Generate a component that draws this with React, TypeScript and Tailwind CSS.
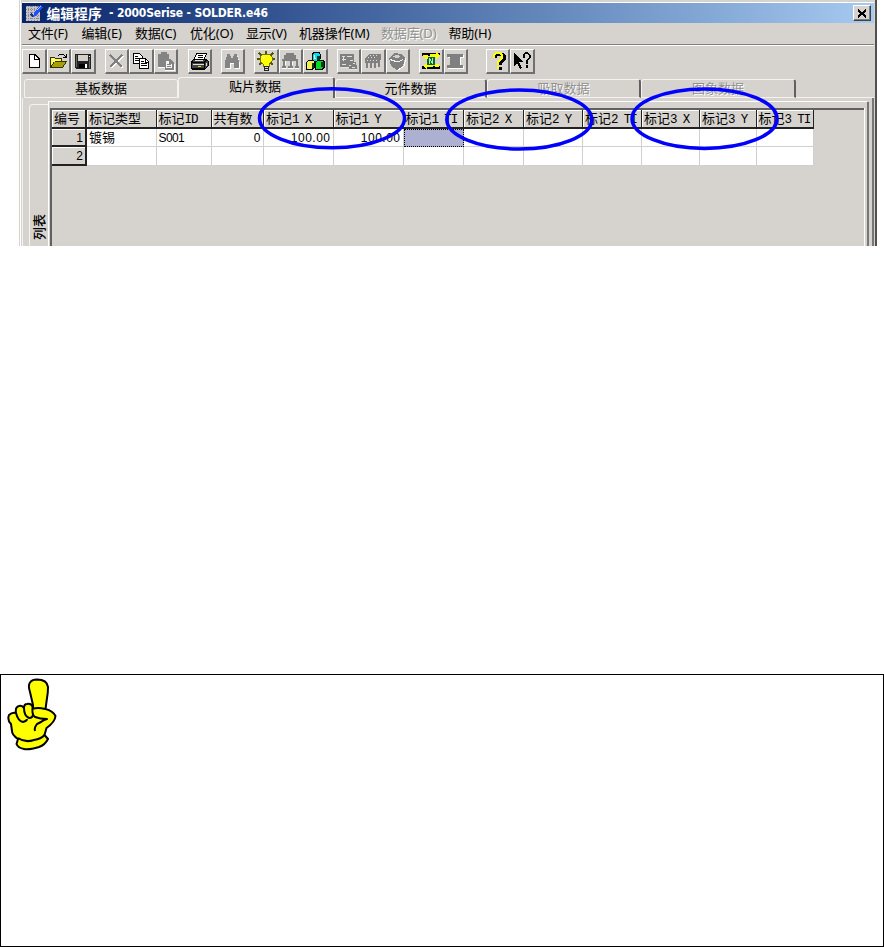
import React from 'react';
import { clsx } from 'clsx';

interface MenuItem {
  label: string;
  width: string;
  disabled?: boolean;
}

interface Column {
  title: string;
  suffix: string;
  width: string;
}

const menus: MenuItem[] = [
  { label: '文件(F)', width: 'w-[53.5px]' },
  { label: '编辑(E)', width: 'w-[53.5px]' },
  { label: '数据(C)', width: 'w-[55px]' },
  { label: '优化(O)', width: 'w-[56px]' },
  { label: '显示(V)', width: 'w-[53px]' },
  { label: '机器操作(M)', width: 'w-[82px]' },
  { label: '数据库(D)', width: 'w-[67.5px]', disabled: true },
  { label: '帮助(H)', width: 'w-[60px]' },
];

const columns: Column[] = [
  { title: '标记类型', suffix: '', width: 'w-[69.5px]' },
  { title: '标记', suffix: 'ID', width: 'w-[55px]' },
  { title: '共有数', suffix: '', width: 'w-[52.5px]' },
  { title: '标记', suffix: '1 X', width: 'w-[69.5px]' },
  { title: '标记', suffix: '1 Y', width: 'w-[70px]' },
  { title: '标记', suffix: '1 TI', width: 'w-[60.5px]' },
  { title: '标记', suffix: '2 X', width: 'w-[60px]' },
  { title: '标记', suffix: '2 Y', width: 'w-[59px]' },
  { title: '标记', suffix: '2 TI', width: 'w-[59px]' },
  { title: '标记', suffix: '3 X', width: 'w-[58px]' },
  { title: '标记', suffix: '3 Y', width: 'w-[56.5px]' },
  { title: '标记', suffix: '3 TI', width: 'w-[57px]' },
];

const rows = [
  ['镀锡', 'S001', '0', '100.00', '100.00', '', '', '', '', '', '', ''],
  ['', '', '', '', '', '', '', '', '', '', '', ''],
];

const tabs = [
  { label: '基板数据', width: 'w-[154px]' },
  { label: '贴片数据', width: 'w-[157px]', active: true },
  { label: '元件数据', width: 'w-[152px]' },
  { label: '吸取数据', width: 'w-[154px]', disabled: true },
  { label: '图象数据', width: 'w-[155px]', disabled: true },
];

const Icon: React.FC<{ children: React.ReactNode }> = ({ children }) => (
  <svg viewBox="0 0 20 20" className="w-5 h-5 shrink-0" fill="none" shapeRendering="crispEdges">
    {children}
  </svg>
);

const icons = {
  file: (
    <Icon>
      <path d="M5 3.500h6l4 4v9H5z" fill="#fff" stroke="#000" />
      <path d="M10.500 3.500v4.500h4.500" stroke="#000" />
    </Icon>
  ),
  open: (
    <Icon>
      <path d="M2.500 16.500v-10h4l1 1h6v3" fill="#ffff33" stroke="#333300" />
      <path d="M2.500 16.500l4-6h12l-4 6z" fill="#a8a000" stroke="#333300" />
      <path d="M4 8h2M4 10h3" stroke="#fff" />
      <path d="M10.500 4.500l2-1.500h3l2 3M15 6.500h3.500v-4" stroke="#000" />
    </Icon>
  ),
  save: (
    <Icon>
      <path d="M2 3h16v15H3l-1-1z" fill="#222" />
      <path d="M5 4h10v6H5z" fill="#d4d0c8" />
      <path d="M6 13h6v4H6z" fill="#000" />
      <path d="M12 13h2v4h-2z" fill="#fff" />
      <path d="M3 4h1v12H3zM16 7h1v10h-1z" fill="#666" />
      <path d="M16 5.500h1" stroke="#fff" />
    </Icon>
  ),
  cut: (
    <Icon>
      <path d="M5 5l12 12M17 5L5 17" stroke="#fff" strokeWidth="1.800" />
      <path d="M4 4l12 12M16 4L4 16" stroke="#808080" strokeWidth="2" />
    </Icon>
  ),
  copy: (
    <Icon>
      <path d="M2.500 2.500h6l3 3v7h-9z" fill="#fff" stroke="#000" />
      <path d="M4 5.500h3M4 7.500h5M4 9.500h5" stroke="#000" />
      <path d="M8.500 7.500h6l3 3v7h-9z" fill="#fff" stroke="#000" />
      <path d="M10 10.500h3M10 12.500h6M10 14.500h6M14.500 8v3h3" stroke="#000" />
    </Icon>
  ),
  paste: (
    <Icon>
      <path d="M3 3h3V1h6v2h2v13H3z" fill="#848484" />
      <path d="M10 8h5l4 4v7h-9z" fill="#848484" />
      <path d="M11 10h3v3h3v4h-6z" fill="#f4f4f4" />
      <path d="M12 13.500h4M12 15.500h4" stroke="#848484" />
      <path d="M3 16.500h7M10 19.500h9v-7" stroke="#fff" />
    </Icon>
  ),
  print: (
    <Icon>
      <path d="M5 8.500L7.500 2.500h10l-2.500 6" fill="#fff" stroke="#000" />
      <path d="M9 4.500h5M8.500 6.500h5" stroke="#000" />
      <path d="M2 12l3-4h11l3 2v5l-3 3H3l-1-2z" fill="#444" stroke="#000" />
      <path d="M3 11.500h12v6M15 11.500l3-3" stroke="#000" />
      <path d="M4 13.500h11M6 9.500h8M17 11.500v3" stroke="#ddd" />
      <path d="M9 15.500h3" stroke="#e6de00" />
      <path d="M3 17.500h13" stroke="#000" />
    </Icon>
  ),
  find: (
    <Icon>
      <path d="M5 4h3v2h1v2h2V6h1V4h3v2l2 5v6h-5v-5H8v5H3v-6l2-5z" fill="#fff" transform="translate(1 1)" />
      <path d="M5 3h3v2h1v2h2V5h1V3h3v2l2 5v7h-5v-5H8v5H3v-7l2-5z" fill="#848484" />
    </Icon>
  ),
  bulb: (
    <Icon>
      <path d="M10 0v3M3 2l3 3M17 2l-3 3M1 8h3M16 8h3M3 14l2-2M17 14l-2-2" stroke="#555500" strokeWidth="1.500" />
      <path d="M7 3h6l3 3v4l-3 3v2H7v-2l-3-3V6z" fill="#ffff00" stroke="#777700" />
      <path d="M7 6h2M7 7h1" stroke="#fff" />
      <path d="M8 15h4v4H8z" fill="#ddd" stroke="#222" />
      <path d="M8 17h4" stroke="#222" />
    </Icon>
  ),
  head: (
    <Icon>
      <path d="M6 2h8v2h2v4h-2v2H6V8H4V4h2z" fill="#808080" />
      <path d="M2 9h4M14 9h4M3.500 9v6M10.500 9v7M17 9v6" stroke="#808080" strokeWidth="2" />
      <path d="M2 15h4v2H2zM8 15h5v2H8zM15 15h4v2h-4z" fill="#808080" />
      <path d="M5.500 10v4M12.500 11v3M2 17.500h5M8 17.500h6M15 17.500h4" stroke="#fff" />
    </Icon>
  ),
  cubes: (
    <Icon>
      <path d="M7 4l2-3h5l1 2v5l-2 2H7z" fill="#00e0f0" stroke="#000" />
      <path d="M1.500 12l2-3h5l1 2v5l-2 2h-6z" fill="#f4f050" stroke="#000" />
      <path d="M10.500 12l2-3h5l2 2v5l-2 2h-7z" fill="#00dc20" stroke="#000" />
      <path d="M12 5h3v4h-3zM7 12h2v5H7zM16 11h3v5h-3z" fill="#053a2a" />
      <path d="M9 4v3h2" stroke="#fff" />
    </Icon>
  ),
  board: (
    <Icon>
      <path d="M2 3h14v8h2v3h1v4h-8v-2H2z" fill="#808080" />
      <path d="M4 5.500h3M9 5.500h5M4 8.500h4M4 13.500h4M5.500 6v4M12 9.500h3M11 14.500h2M15 12.500h2M14 16.500h3M2 16.500h9M11 18.500h8" stroke="#e4e2dc" />
    </Icon>
  ),
  comb: (
    <Icon>
      <path d="M6 3h12v6l-3 3H2V8z" fill="#808080" />
      <path d="M3.500 11v6M7.500 11v6M11.500 11v6M15.500 9v7" stroke="#808080" strokeWidth="2" />
      <path d="M7 4.500h9M5 6.500h9M4 9.500h10M5.500 13v4M9.500 13v4M13.500 13v4M17.500 9v5" stroke="#e0ded8" strokeDasharray="1 2" />
    </Icon>
  ),
  box: (
    <Icon>
      <path d="M2 7l6-5 6 1 4 4-2 8-6 4-6-4z" fill="#808080" />
      <path d="M5 6l4-2 5 1-3 2z" fill="#d4d0c8" />
      <path d="M3 8.500l6 2h3l4-2" stroke="#f4f4f4" />
      <path d="M10 19.500l7-4 2-8" stroke="#fff" />
    </Icon>
  ),
  convey: (
    <Icon>
      <path d="M1 2h18v3h-3v10h3v3H1v-3h3V5H1z" fill="#000" />
      <path d="M4 5h12v10H4z" fill="#d6d3ce" />
      <path d="M6 6h8v8H6z" fill="#006b28" />
      <path d="M8.500 13V8l3 4V7" stroke="#b8e8b8" />
      <path d="M9 3h6V1l4 3-4 4V6H9zM12 14H6v-2l-4 3 4 4v-3h6zM2 4h5v4H4V6H2zM14 13h4v3h-4z" fill="#ffff00" />
    </Icon>
  ),
  beam: (
    <Icon>
      <path d="M3 4h16v3h-3v8h3v3H3v-3h3V7H3z" fill="#fff" />
      <path d="M2 3h16v3h-3v8h3v3H2v-3h3V6H2z" fill="#808080" />
    </Icon>
  ),
  help: (
    <Icon>
      <path d="M8 7V5l2-2h5l2 2v3l-4 4v2M13 16v3" stroke="#000" strokeWidth="3" />
      <path d="M7 7V4l2-2h4l2 2v3l-4 4v3M11 15v3" stroke="#ffff00" strokeWidth="2.500" />
    </Icon>
  ),
  whatsThis: (
    <Icon>
      <path d="M2 2v13l3-3 3 6 2-1-3-6h4z" fill="#000" />
      <path d="M11.500 7V4l2-2h2l2 2v3l-3 3v3M14.500 14v3" stroke="#000" strokeWidth="2" />
    </Icon>
  ),
};

const toolGroups = [
  { gap: 'ml-0', items: ['file', 'open', 'save'] },
  { gap: 'ml-[9px]', items: ['cut', 'copy', 'paste'] },
  { gap: 'ml-[9.5px]', items: ['print'] },
  { gap: 'ml-[8.5px]', items: ['find'] },
  { gap: 'ml-[9px]', items: ['bulb', 'head', 'cubes'] },
  { gap: 'ml-[9px]', items: ['board', 'comb', 'box'] },
  { gap: 'ml-[9px]', items: ['convey', 'beam'] },
  { gap: 'ml-[17.5px]', items: ['help', 'whatsThis'] },
];

const TitleBar = () => (
  <div className="flex items-center h-5 pl-[3px] pr-[3px] bg-linear-to-r from-[#0a246a] to-[#a6caf0]">
    <svg viewBox="0 0 18 18" className="w-[18px] h-[18px]" shapeRendering="crispEdges">
      <rect x="1" y="2" width="14" height="15" fill="#c4c4cc" />
      <path d="M1 2.500h14M1 5.500h14M1 8.500h14M1 11.500h14M1 14.500h14M3.500 2v15M6.500 2v15M9.500 2v15M12.500 2v15" stroke="#888" strokeDasharray="1 1" />
      <path d="M6 10l3 3" stroke="#1a3080" strokeWidth="1.500" fill="none" />
      <path d="M9 9l6-8 3 2-6 8-4 2z" fill="#2050ff" />
      <path d="M12 6l4-4" stroke="#b8d0ff" />
    </svg>
    <div className="flex ml-[3.5px] text-white font-bold whitespace-pre leading-5">
      <span className="text-[13.8px] w-[62.5px] font-['Noto_Sans_CJK_SC',sans-serif]">编辑程序</span>
      <span className="text-[12px] font-['DejaVu_Sans_Condensed','Noto_Sans',sans-serif] tracking-[-0.18px]">- 2000Serise - SOLDER.e46</span>
    </div>
    <button className="ml-auto w-[18px] h-4 flex items-center justify-center bg-[#d6d3ce] border border-t-white border-l-white border-r-[#404040] border-b-[#404040] shadow-[inset_-1px_-1px_0_#808080]">
      <svg viewBox="0 0 10 9" className="w-2.5 h-[9px]" shapeRendering="crispEdges">
        <path d="M1 1l8 7M9 1L1 8" stroke="#000" strokeWidth="2" />
      </svg>
    </button>
  </div>
);

const Toolbar = () => (
  <div className="flex h-[25px] mt-[2px]">
    {toolGroups.map((group, i) => (
      <div key={i} className={clsx('flex', group.gap)}>
        {group.items.map((name) => (
          <button
            key={name}
            className="w-[24.5px] h-[25px] flex items-center justify-center border-t border-l border-r-2 border-b-2 border-t-white border-l-white border-r-[#707070] border-b-[#707070]"
          >
            {icons[name as keyof typeof icons]}
          </button>
        ))}
      </div>
    ))}
  </div>
);

const TabStrip = () => (
  <div className="flex items-end h-[21px] pl-[2px] mt-[3px] leading-[16px] text-[13px]">
    {tabs.map((tab) => (
      <div
        key={tab.label}
        className={clsx(
          'text-center border-t border-l border-[#f4f3f0] rounded-t-[3px]',
          tab.width,
          tab.active ? 'h-[21px] pr-0.5' : 'h-[19px] border-b',
          tab.label === '基板数据' ? 'border-r' : 'border-r-2 border-r-[#606060]',
          tab.disabled && 'text-[#909090] [text-shadow:1px_1px_0_#fff]'
        )}
      >
        {tab.label}
      </div>
    ))}
    <div className="flex-1 border-b border-[#f4f3f0]" />
  </div>
);

const DataGrid = () => (
  <div className="flex-1 border-l-2 border-t-2 border-[#606060] text-[13px]">
    <div className="flex h-[18.5px] leading-[17px] bg-[#d6d3ce] w-fit">
      <div className="w-[35px] pl-[2px] border-r-2 border-b-2 border-[#222] shadow-[inset_1px_1px_0_#fff]">编号</div>
      {columns.map((col, i) => (
        <div
          key={i}
          className={clsx('pl-[2px] border-r border-b-2 border-[#222] whitespace-pre shadow-[inset_1px_1px_0_#fff]', col.width)}
        >
          {col.title}
          <span className="text-[12.5px] tracking-[-1.1px] font-['Liberation_Mono',monospace]">{col.suffix}</span>
        </div>
      ))}
    </div>
    {rows.map((row, r) => (
      <div key={r} className="flex h-[18.5px] leading-[18px]">
        <div className="w-[35px] pr-[2px] text-right font-['Liberation_Sans',sans-serif] text-[12px] border-r-2 border-b-2 border-[#222] shadow-[inset_1px_1px_0_#fff]">
          {r + 1}
        </div>
        {row.map((cell, c) => (
          <div
            key={c}
            className={clsx(
              'px-[2px]',
              columns[c].width,
              c > 1 && 'text-right',
              c === 0 && 'leading-[16px]',
              c === 1 && "font-['Liberation_Sans',sans-serif] text-[12px] tracking-[-0.6px]",
              c > 1 && "font-['Liberation_Sans',sans-serif] text-[12px] tracking-[0.5px]",
              r === 0 && c === 5
                ? 'bg-[#adb0d0] border border-dotted border-black'
                : 'bg-white border-r border-b border-[#d0d0d0]'
            )}
          >
            {cell}
          </div>
        ))}
      </div>
    ))}
  </div>
);

const Markers = () => (
  <svg viewBox="0 0 884 170" className="absolute left-0 top-0 w-[884px] h-[170px] pointer-events-none" fill="none" stroke="#0000ff" strokeWidth="3.500">
    <ellipse cx="332" cy="118.300" rx="72.500" ry="29.500" />
    <ellipse cx="519.300" cy="119.500" rx="72.500" ry="29.500" />
    <ellipse cx="704.500" cy="118.700" rx="72.500" ry="29.700" />
  </svg>
);

const PointingHand = () => (
  <svg viewBox="0 0 52 73" className="w-[52px] h-[73px]" fill="#ffff00" stroke="#000" strokeWidth="2" strokeLinejoin="round">
    <path d="M26 27L23 14Q19 2 30 1.500Q40 1.500 41 9Q41 15 40 20L38.500 31Q46 33 48.500 38Q48 44 39.500 50L37.500 57L41 61Q38 67 32 69Q22 72 17 71Q11 70 9.500 66L11 61Q5 57 5 53L4 46Q0 42 2 37Q5 34 9 35Q8 29 12 28Q15 27 17 30Q17 26 20 26Q24 25 26 29Z" />
    <path d="M9 35Q11 43 16 44Q20 43 20 41M17 30Q17 38 22 40Q26 40 26 36M26 27Q24 36 28 39Q33 41 40 41Q36 42 34 44L30 46Q27 50 28 53M25 31Q31 29 38 31M11 60Q18 65 27 62Q34 61 37.500 57" fill="none" />
  </svg>
);

const App: React.FC = () => {
  return (
    <div className="relative w-[884px] h-[947px] bg-white flex flex-col text-black overflow-hidden font-['Noto_Sans','Noto_Sans_CJK_SC',sans-serif]">
      {/* Editor window */}
      <div className="ml-[19px] w-[858px] h-[246px] flex bg-[#d6d3ce] border-l border-[#d6d3ce] shadow-[inset_1px_0_0_#fff] overflow-hidden">
        <div className="flex-1 min-w-0 ml-[2px] flex flex-col">
          <div className="h-[3px] border-b border-white mr-px shrink-0" />
          <div className="mr-px shrink-0">
            <TitleBar />
            <div className="flex h-[22px] pl-[6px] text-[13px] leading-[20px] whitespace-nowrap border-b border-[#808080] shadow-[0_1px_0_#fff]">
              {menus.map((menu) => (
                <div key={menu.label} className={clsx('shrink-0 tracking-[-0.15px]', menu.width, menu.disabled && 'text-[#909090] [text-shadow:1px_1px_0_#fff]')}>
                  {menu.label}
                </div>
              ))}
            </div>
            <div className="h-[2px]" />
            <Toolbar />
            <TabStrip />
          </div>
          {/* Tab page */}
          <div className="flex-1 flex border-l border-[#f4f3f0] pl-[6px]">
            <div className="w-[19px] mt-[6px] border-t border-l border-[#f4f3f0] rounded-tl-[4px] flex justify-center items-end pb-[6px]">
              <span className="[writing-mode:vertical-rl] rotate-180 text-[13px] font-medium leading-[18px] font-['Noto_Sans_CJK_SC',sans-serif] [text-orientation:sideways]">
                列表
              </span>
            </div>
            <div className="flex-1 flex mt-[3px] pt-[6px] pl-px border-t border-l border-white">
              <DataGrid />
              <div className="w-px bg-white" />
              <div className="w-[2px]" />
            </div>
            <div className="w-[2px] mt-[4px] bg-[#777]" />
            <div className="w-[3px]" />
            <div className="w-[2px] bg-[#777]" />
            <div className="w-px" />
          </div>
        </div>
        <div className="w-0.5 bg-[#505050]" />
      </div>

      <Markers />

      {/* Note */}
      <div className="mt-[428px] h-[273px] border border-black pl-[6px] pt-[3px]">
        <PointingHand />
      </div>
    </div>
  );
};

export default App;
